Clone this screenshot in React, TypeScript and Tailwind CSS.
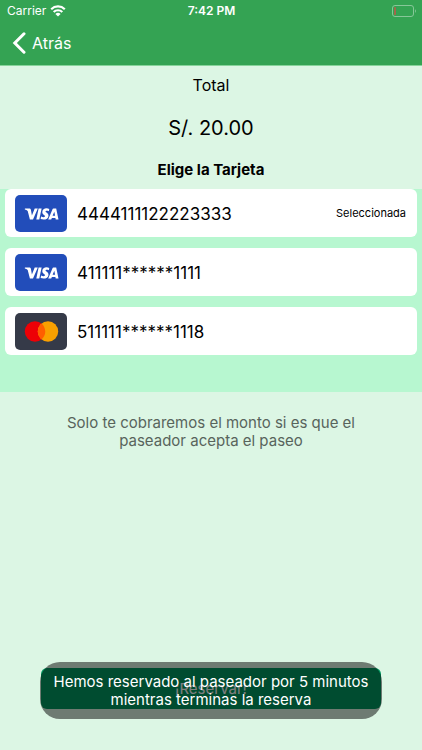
import React, { useState } from "react";

type Brand = "visa" | "mastercard";

const cards: { number: string; brand: Brand }[] = [
  { number: "4444111122223333", brand: "visa" },
  { number: "411111******1111", brand: "visa" },
  { number: "511111******1118", brand: "mastercard" },
];

function StatusBar() {
  return (
    <div className="grid h-5 grid-cols-3 items-center pt-0.5 pr-1.5 pl-[7px] text-xs">
      <div className="flex items-center gap-1">
        <span>Carrier</span>
        <svg className="h-3 w-4" viewBox="0 0 16 12" fill="none" stroke="currentColor" strokeWidth="2.200" aria-hidden="true">
          <path d="M1.200 4.200a9.800 9.800 0 0 1 13.600 0" />
          <path d="M3.700 7a6.200 6.200 0 0 1 8.600 0" />
          <path d="M8 11.600 5.400 8.900a3.800 3.800 0 0 1 5.200 0Z" fill="currentColor" stroke="none" />
        </svg>
      </div>
      <span className="text-center font-semibold">7:42 PM</span>
      <svg className="h-3 w-6 justify-self-end" viewBox="0 0 24 12" fill="none" aria-hidden="true">
        <rect x="0.5" y="0.5" width="21" height="11" rx="2.5" stroke="#86c798" />
        <rect x="2" y="2" width="2" height="8" rx="0.5" fill="#a0684a" />
        <path d="M23 4.200c1.200.6 1.200 3 0 3.600Z" fill="#86c798" />
      </svg>
    </div>
  );
}

function CardLogo({ brand }: { brand: Brand }) {
  if (brand === "mastercard") {
    return (
      <svg className="h-[37px] w-[52px] shrink-0" viewBox="0 0 52 37" role="img" aria-label="Mastercard">
        <rect width="52" height="37" rx="5" fill="#353a48" />
        <circle cx="20" cy="18.500" r="10.200" fill="#ed0006" />
        <circle cx="33" cy="18.500" r="10.200" fill="#f9a000" />
        <path d="M26.500 10.600a10.200 10.200 0 0 1 0 15.800a10.200 10.200 0 0 1 0-15.800Z" fill="#ff5e00" />
      </svg>
    );
  }
  return (
    <svg className="h-[37px] w-[52px] shrink-0" viewBox="0 0 52 37" role="img" aria-label="Visa">
      <rect width="52" height="37" rx="5" fill="#224dba" />
      <g fill="#fff">
        <path d="M9.900 13.500h4.300c.9 0 1.500.4 1.700 1.300l1 5.600 2.800-6.900h3.100L18 24.500h-3.100l-2.200-8.400c-.8-.8-1.700-1.300-2.900-1.600Z" />
        <path d="M23.600 13.500h3l-2.300 11h-3Z" />
        <path d="M34.300 13.900l-.5 2.400c-1.400-.6-3.200-.7-3.200.2 0 1.100 3.100 1.400 2.900 4.400-.2 3.100-3.900 4.400-7.900 3.200l.5-2.500c1.700.7 4 .8 4-.3.100-1.200-2.900-1.500-2.800-4.400.2-3.100 3.500-4.400 7-3Z" />
        <path fillRule="evenodd" d="M38.500 13.500h2.700l2.300 11h-2.800l-.3-1.500h-3.500l-.7 1.500h-3l4.200-10c.2-.6.600-1 1.100-1Zm.8 3.300-1.700 4h2.500Z" />
      </g>
    </svg>
  );
}

export default function App() {
  const [selected, setSelected] = useState(0);

  return (
    <div className="flex min-h-screen flex-col bg-[#dcf6e4] font-[Inter,'Liberation_Sans',sans-serif] text-black">
      <header className="border-b border-[#86d49a] bg-[#34a353] text-white">
        <StatusBar />
        <nav className="flex h-[45px] items-center px-3">
          <button type="button" className="flex items-center gap-1.5 text-base">
            <svg className="h-[22px] w-3.5" viewBox="0 0 14 22" fill="none" stroke="currentColor" strokeWidth="3" strokeLinecap="round" aria-hidden="true">
              <path d="M12 1.800 2.800 11l9.200 9.200" />
            </svg>
            Atrás
          </button>
        </nav>
      </header>

      <main className="flex grow flex-col">
        <section className="flex flex-col items-center py-[7px]">
          <h1 className="text-base">Total</h1>
          <p className="mt-[17px] text-xl leading-7">S/. 20.00</p>
          <h2 className="mt-4 text-[15px] leading-6 font-bold">Elige la Tarjeta</h2>
        </section>

        <ul className="flex flex-col gap-[11px] bg-[#b7f7d0] px-[5px] pb-[37px]">
          {cards.map((card, index) => (
            <li key={card.number}>
              <button
                type="button"
                aria-pressed={index === selected}
                onClick={() => setSelected(index)}
                className="flex h-12 w-full items-center rounded-md bg-white pr-[11px] pl-2.5 text-left"
              >
                <CardLogo brand={card.brand} />
                <span className="ml-2.5 grow pt-0.5 text-[17px] leading-6">{card.number}</span>
                {index === selected && <span className="text-[11px]">Seleccionada</span>}
              </button>
            </li>
          ))}
        </ul>

        <p className="px-14 pt-[22px] text-center text-[15px] leading-[18px] text-[#58645c]">
          Solo te cobraremos el monto si es que el paseador acepta el paseo
        </p>

        <footer className="relative mx-10 mt-auto mb-[31px] flex h-[57px] items-center">
          <button type="button" className="mx-px mb-1 h-[41px] w-full rounded-md bg-[#009860] pt-0.5 text-[15px] text-white">
            ¡Reservar!
          </button>
          <div
            role="status"
            className="absolute inset-0 flex items-center justify-center rounded-[20px] bg-black/50 px-3 text-center text-[15px] leading-[18px] text-white"
          >
            Hemos reservado al paseador por 5 minutos mientras terminas la reserva
          </div>
        </footer>
      </main>
    </div>
  );
}
